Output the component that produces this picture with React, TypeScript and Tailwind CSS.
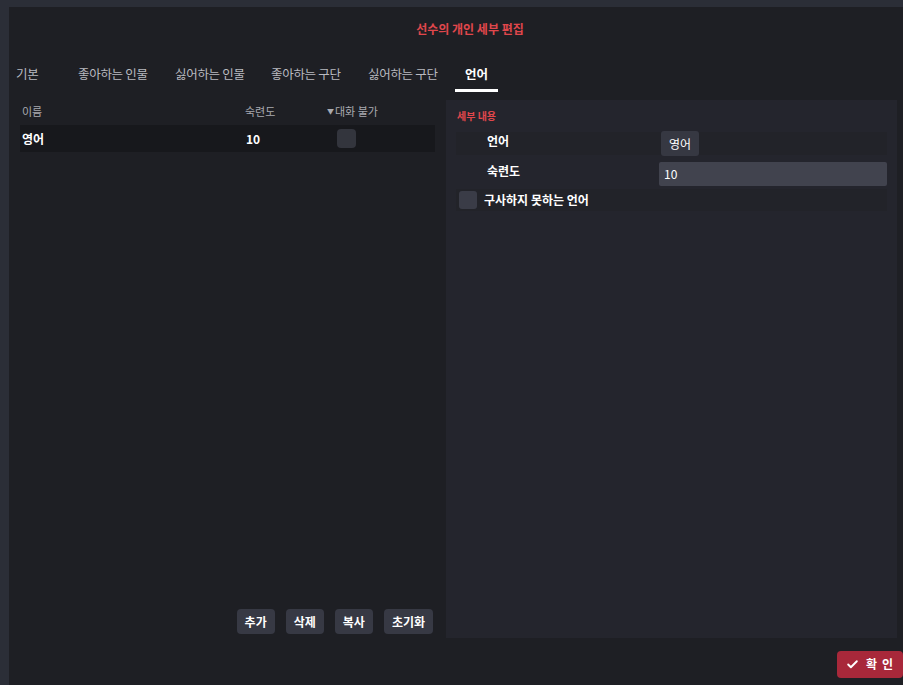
import { Check } from "lucide-react"

const tabs = [
  { label: "기본", w: "w-[62px]" },
  { label: "좋아하는 인물", w: "w-[97px]" },
  { label: "싫어하는 인물", w: "w-[96px]" },
  { label: "좋아하는 구단", w: "w-[97px]" },
  { label: "싫어하는 구단", w: "w-[97px]" },
  { label: "언어", w: "w-[60px]" },
]

function SmallButton({ label }: { label: string }) {
  return (
    <button className="h-[25px] px-[8px] rounded-[4px] bg-[#373944] text-[12px] font-semibold text-white">
      {label}
    </button>
  )
}

export default function App() {
  return (
    <div
      className="w-[903px] h-[685px] bg-[#2b2e37] pl-[9px] pt-[7px] overflow-hidden"
      style={{ fontFamily: '"Noto Sans CJK KR", "Noto Sans", sans-serif' }}
    >
      <div className="w-full h-full bg-[#1e1f24] flex flex-col">
        {/* title */}
        <div className="h-[42px] flex items-center justify-center pl-[28px] pt-[2px]">
          <span className="text-[12px] font-bold text-[#e0474c]">선수의 개인 세부 편집</span>
        </div>

        {/* tabs */}
        <div className="h-[43px] flex items-end pl-[7px]">
          {tabs.map((t) => {
            const active = t.label === "언어"
            return (
              <div key={t.label} className={t.w + " flex"}>
                {active ? (
                  <div className="flex flex-col items-center -ml-[10px]">
                    <span className="text-[12.5px] font-bold text-white leading-[18px] px-[10px]">{t.label}</span>
                    <div className="mt-[6px] h-[3px] w-[43px] bg-white" />
                  </div>
                ) : (
                  <div className="flex flex-col">
                    <span className="text-[12.5px] text-[#b9bac0] leading-[18px] tracking-[-0.3px]">{t.label}</span>
                    <div className="mt-[6px] h-[3px]" />
                  </div>
                )}
              </div>
            )
          })}
        </div>

        <div className="flex flex-1 pt-[8px]">
          {/* left list */}
          <div className="w-[437px] flex flex-col pl-[11px] pr-[11px] pb-[4px]">
            <div className="flex items-center h-[25px] text-[11px] text-[#a9aab0] pb-[2px]">
              <span className="w-[225px] pl-[2px]">이름</span>
              <span className="w-[82px]">숙련도</span>
              <span className="flex items-center">
                <span className="text-[7px] mr-[1px]">▼</span>대화 불가
              </span>
            </div>
            <div className="flex items-center h-[27px] bg-[#17181c] text-[12px] font-bold text-white">
              <span className="w-[225px] pl-[2px]">영어</span>
              <span className="w-[92px] pl-px">10</span>
              <span className="w-[19px] h-[19px] rounded-[4px] bg-[#33353d]" />
            </div>
            <div className="flex-1" />
            <div className="flex justify-end gap-[11px] pr-[2px]">
              <SmallButton label="추가" />
              <SmallButton label="삭제" />
              <SmallButton label="복사" />
              <SmallButton label="초기화" />
            </div>
          </div>

          {/* right detail panel */}
          <div className="w-[451px] h-[538px] bg-[#24252d] pt-[8px] px-[10px]">
            <div className="text-[10px] font-bold text-[#e0474c] leading-[16px] pl-px">세부 내용</div>
            <div className="mt-[8px] flex items-center h-[23px] bg-[#222329] text-[12px] font-bold text-white">
              <span className="w-[205px] pl-[31px] -mt-[6px]">언어</span>
              <span className="h-[25px] px-[8px] rounded-[3px] bg-[#363842] flex items-center font-normal text-[12px]">
                영어
              </span>
            </div>
            <div className="mt-[6px] flex items-center h-[25px] text-[12px] font-bold text-white">
              <span className="w-[203px] pl-[31px] -mt-[6px]">숙련도</span>
              <span className="flex-1 h-[24px] rounded-[2px] bg-[#41434e] flex items-center pl-[5px] font-normal">
                10
              </span>
            </div>
            <div className="mt-[3px] flex items-center h-[22px] bg-[#222329] text-[12px] font-bold text-white">
              <span className="w-[18px] h-[18px] rounded-[3px] bg-[#3a3c47] ml-[3px] mr-[7px]" />
              구사하지 못하는 언어
            </div>
          </div>
        </div>

        {/* footer */}
        <div className="h-[47px] flex items-center justify-end">
          <button className="h-[27px] w-[66px] rounded-[4px] bg-[#a8283a] flex items-center pl-[9px] text-[12px] font-bold text-white mb-[-5px]">
            <Check size={13} strokeWidth={3.5} />
            <span className="ml-[7px]">확</span>
            <span className="ml-[5px]">인</span>
          </button>
        </div>
      </div>
    </div>
  )
}
